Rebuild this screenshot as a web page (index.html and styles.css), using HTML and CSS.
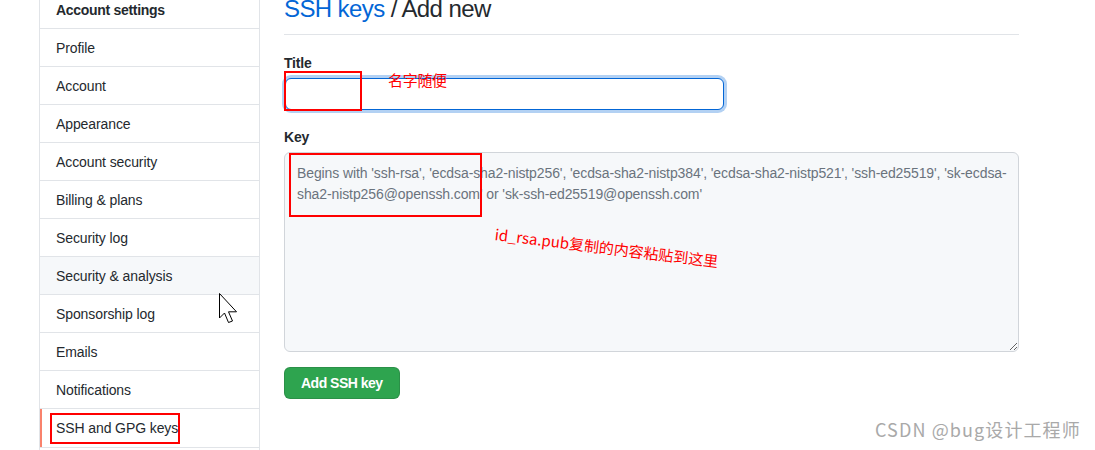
FILE: index.html
```html
<!DOCTYPE html>
<html lang="en">
<head>
<meta charset="utf-8">
<title>SSH keys / Add new</title>
<link rel="stylesheet" href="styles.css">
</head>
<body>
<div class="page">
  <nav class="menu">
    <div class="menu-heading">Account settings</div>
    <a class="menu-item" href="#">Profile</a>
    <a class="menu-item" href="#">Account</a>
    <a class="menu-item" href="#">Appearance</a>
    <a class="menu-item" href="#">Account security</a>
    <a class="menu-item" href="#">Billing &amp; plans</a>
    <a class="menu-item" href="#">Security log</a>
    <a class="menu-item hover" href="#">Security &amp; analysis</a>
    <a class="menu-item" href="#">Sponsorship log</a>
    <a class="menu-item" href="#">Emails</a>
    <a class="menu-item" href="#">Notifications</a>
    <a class="menu-item selected" href="#"><span class="mark mark-nav">SSH and GPG keys</span></a>
  </nav>
  <main class="content">
    <h2 class="subhead"><a class="subhead-link" href="#">SSH keys</a> / Add new</h2>
    <form class="form">
      <div class="form-group">
        <label class="label" for="title">Title</label>
        <div class="field-wrap">
          <input id="title" class="input focus" type="text">
          <span class="mark mark-title"></span>
          <span class="note note-title">名字随便</span>
        </div>
      </div>
      <div class="form-group">
        <label class="label" for="key">Key</label>
        <div class="field-wrap">
          <textarea id="key" class="textarea" placeholder="Begins with 'ssh-rsa', 'ecdsa-sha2-nistp256', 'ecdsa-sha2-nistp384', 'ecdsa-sha2-nistp521', 'ssh-ed25519', 'sk-ecdsa-&#10;sha2-nistp256@openssh.com' or 'sk-ssh-ed25519@openssh.com'"></textarea>
          <span class="mark mark-key"></span>
          <span class="note note-key">id_rsa.pub复制的内容粘贴到这里</span>
        </div>
      </div>
      <button class="btn" type="button">Add SSH key</button>
    </form>
  </main>
</div>
<svg class="cursor" width="20" height="32" viewBox="0 0 20 32">
  <path d="M0.5 0.5 L0.5 25 L5.5 20 L9.5 29.5 L13.5 28 L9.5 18.8 L17.5 18.8 Z" fill="#fff" stroke="#000" stroke-width="1" stroke-linejoin="miter"/>
</svg>
<div class="watermark">CSDN @bug设计工程师</div>
</body>
</html>
```
FILE: styles.css
```css
* { box-sizing: border-box; }
html, body { margin: 0; padding: 0; background: #fff; overflow: hidden; }
body {
  width: 1095px;
  height: 450px;
  position: relative;
  font-family: "Liberation Sans", "Noto Sans CJK SC", sans-serif;
  font-size: 14px;
  line-height: 21px;
  color: #24292e;
}
.page {
  display: flex;
  align-items: flex-start;
  gap: 24px;
  padding-left: 39px;
}
.menu {
  width: 221px;
  flex: none;
  margin-top: -10px;
  border: 1px solid #e1e4e8;
  border-radius: 6px;
  display: flex;
  flex-direction: column;
  padding-bottom: 20px;
}
.menu-heading {
  padding: 9px 16px 7px;
  font-weight: 600;
  line-height: 21px;
  letter-spacing: -0.3px;
}
.menu-item {
  display: block;
  padding: 9px 16px 7px;
  border-top: 1px solid #e1e4e8;
  color: #24292e;
  text-decoration: none;
  line-height: 21px;
  letter-spacing: -0.1px;
}
.menu-item.hover { background: #f6f8fa; }
.menu-item.selected {
  border-bottom: 1px solid #e1e4e8;
  box-shadow: inset 2px 0 0 #f9826c;
}
.content {
  width: 735px;
  flex: none;
  margin-top: -9px;
}
.subhead {
  margin: 0;
  padding-bottom: 7px;
  border-bottom: 1px solid #e1e4e8;
  font-size: 24px;
  line-height: 36px;
  font-weight: 400;
  letter-spacing: -0.6px;
}
.subhead-link { color: #0366d6; text-decoration: none; }
.form { margin-top: 17px; }
.form-group { margin-bottom: 16px; }
.form-group:last-of-type { margin-bottom: 15px; }
.label {
  display: block;
  font-weight: 600;
  line-height: 20px;
  padding-top: 1px;
  margin-bottom: 5px;
  letter-spacing: -0.2px;
}
.field-wrap { position: relative; }
.input {
  display: block;
  margin-left: 1px;
  width: 439px;
  height: 32px;
  padding: 5px 12px;
  font: inherit;
  border: 1px solid #0366d6;
  border-radius: 6px;
  background: #fff;
  outline: none;
  box-shadow: 0 0 0 3px rgba(3, 102, 214, 0.3);
}
.textarea {
  display: block;
  width: 735px;
  height: 200px;
  padding: 10px 4px 6px 12px;
  font: inherit;
  line-height: 21px;
  color: #24292e;
  background: #f6f8fa;
  border: 1px solid #d1d5da;
  border-radius: 6px;
  resize: vertical;
  outline: none;
}
.textarea::placeholder { color: #6a737d; opacity: 1; letter-spacing: -0.1px; }
.btn {
  display: block;
  height: 32px;
  padding: 5px 16px;
  font: inherit;
  font-weight: 600;
  color: #fff;
  background: #2ea44f;
  border: 1px solid rgba(27, 31, 35, 0.15);
  border-radius: 6px;
  letter-spacing: -0.5px;
}
.mark { border: 2px solid #f00; }
.mark-nav {
  display: inline-block;
  white-space: nowrap;
  margin: -6px 0 -4px -6px;
  padding: 3px 4px;
  width: 130px;
  line-height: 21px;
}
.mark-title {
  position: absolute;
  left: 0;
  top: -7px;
  width: 78px;
  height: 40px;
}
.mark-key {
  position: absolute;
  left: 5px;
  top: 1px;
  width: 193px;
  height: 64px;
}
.note { position: absolute; color: #f00; white-space: nowrap; font-family: "Noto Sans CJK SC", sans-serif; }
.note-title { left: 104px; top: -9px; font-size: 15px; letter-spacing: -0.3px; }
.note-key {
  left: 211px;
  top: 71px;
  font-size: 15px;
  transform: rotate(7deg);
  transform-origin: left center;
}
.cursor { position: absolute; left: 219px; top: 293px; }
.watermark {
  position: absolute;
  left: 875px;
  top: 416px;
  font-family: "Noto Sans CJK SC", sans-serif;
  font-size: 18px;
  line-height: 26px;
  color: #a9a9a9;
  letter-spacing: 1.1px;
}
```
